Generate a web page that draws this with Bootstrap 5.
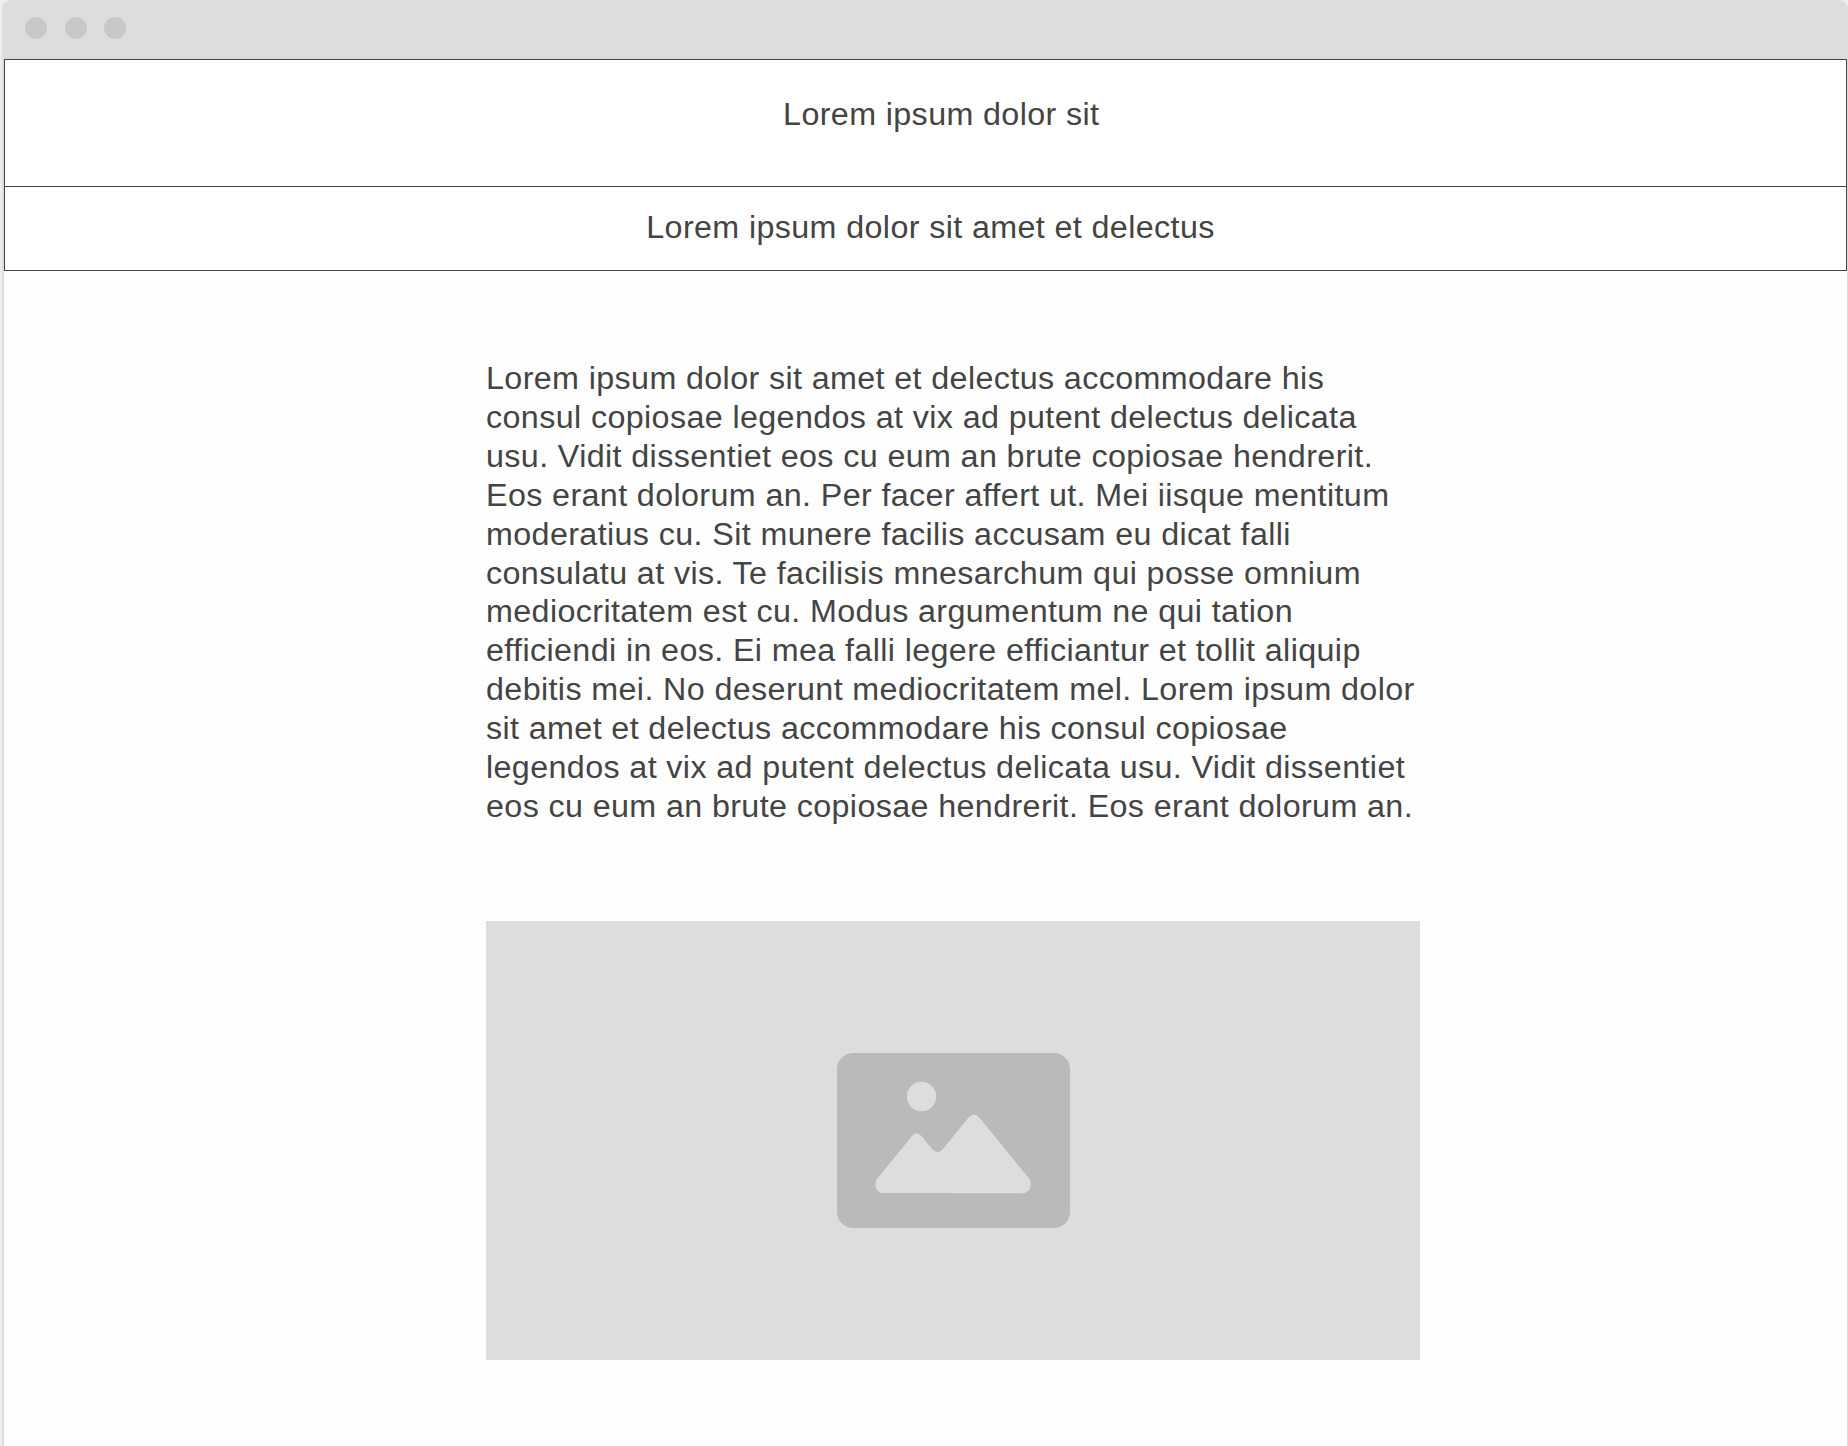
<!DOCTYPE html>
<html lang="la">
<head>
<meta charset="utf-8">
<meta name="viewport" content="width=device-width, initial-scale=1">
<title>Lorem ipsum dolor sit</title>
<link href="https://cdn.jsdelivr.net/npm/bootstrap@5.3.0/dist/css/bootstrap.min.css" rel="stylesheet">
<style>
  body { background: #ededed; color: #444; font-family: "Liberation Sans", Arial, sans-serif; font-size: 32.25px; letter-spacing: .385px; line-height: 38.9px; }
  .window-frame { height: 1446px; margin-left: 2px; padding: 0 1px 0 2px; background: #ddd; border-radius: 9px 9px 0 0; }
  .title-bar { height: 59px; gap: 17.4px; padding: 0 0 3px 21.2px; }
  .window-dot { width: 22px; height: 22px; background: #c8c8c8; }
  .page-area { background: #fefefe; }
  .header-row { height: 128px; border: 1px solid #444; padding: 35px 0 0 31.5px; }
  .nav-row { height: 84px; border: 1px solid #444; border-top: 0; padding: 21px 0 0 10px; }
  .article-column { width: 934px; margin-left: 482px; padding-top: 88px; }
  .article-text { height: 467px; margin-bottom: 95px; }
  .picture-box { height: 439px; background: #ddd; }
</style>
</head>
<body class="overflow-hidden">
<div class="window-frame d-flex flex-column overflow-hidden">
  <div class="title-bar d-flex align-items-center flex-shrink-0">
    <span class="window-dot rounded-circle"></span>
    <span class="window-dot rounded-circle"></span>
    <span class="window-dot rounded-circle"></span>
  </div>
  <div class="page-area flex-grow-1">
    <header class="header-row bg-white text-center">Lorem ipsum dolor sit</header>
    <nav class="nav-row bg-white text-center">Lorem ipsum dolor sit amet et delectus</nav>
    <main class="article-column">
      <p class="article-text text-nowrap">Lorem ipsum dolor sit amet et delectus accommodare his<br>consul copiosae legendos at vix ad putent delectus delicata<br>usu. Vidit dissentiet eos cu eum an brute copiosae hendrerit.<br>Eos erant dolorum an. Per facer affert ut. Mei iisque mentitum<br>moderatius cu. Sit munere facilis accusam eu dicat falli<br>consulatu at vis. Te facilisis mnesarchum qui posse omnium<br>mediocritatem est cu. Modus argumentum ne qui tation<br>efficiendi in eos. Ei mea falli legere efficiantur et tollit aliquip<br>debitis mei. No deserunt mediocritatem mel. Lorem ipsum dolor<br>sit amet et delectus accommodare his consul copiosae<br>legendos at vix ad putent delectus delicata usu. Vidit dissentiet<br>eos cu eum an brute copiosae hendrerit. Eos erant dolorum an.</p>
      <div class="picture-box d-flex align-items-center justify-content-center">
        <svg width="233" height="175" viewBox="0 0 233 175" role="img" aria-label="Picture">
          <rect width="233" height="175" rx="16" fill="#bababa"/>
          <circle cx="84.5" cy="43.5" r="14.7" fill="#ddd"/>
          <path fill="#ddd" d="M40 126 L75 83 Q79.500 77.500 84.500 83 L95.500 96.500 Q100.500 101.500 105.500 96.500 L132 64 Q137 59 142 64 L192.500 126 C196 132 193 140.300 185 140.300 L116 140.300 L116 140 L47 140 C39.500 140 36 132 40 126 Z"/>
        </svg>
      </div>
    </main>
  </div>
</div>
<script src="https://cdn.jsdelivr.net/npm/bootstrap@5.3.0/dist/js/bootstrap.bundle.min.js"></script>
</body>
</html>
